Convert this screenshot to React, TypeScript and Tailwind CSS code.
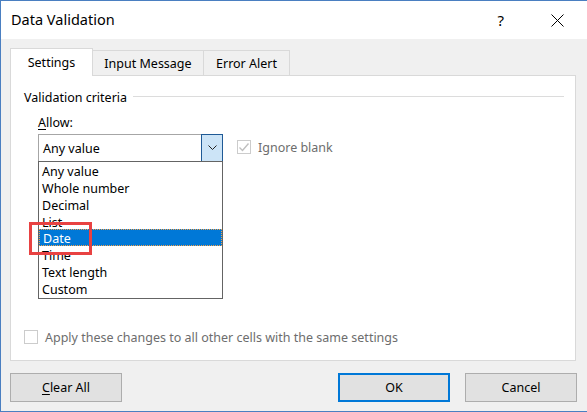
import React from 'react'

const font = { fontFamily: '"Noto Sans", "Open Sans", sans-serif' }

const items = ['Any value', 'Whole number', 'Decimal', 'List', 'Date', 'Time', 'Text length', 'Custom']

function Checkbox({ checked }: { checked?: boolean }) {
  return (
    <span className="w-[14px] h-[14px] border border-[#cccccc] bg-white flex items-center justify-center shrink-0">
      {checked && (
        <svg width="12" height="12" viewBox="0 0 12 12">
          <path d="M1.5 6.5 L4.5 9.5 L10.5 2.5" fill="none" stroke="#bfbfbf" strokeWidth="1.4" />
        </svg>
      )}
    </span>
  )
}

function Button({ children, primary }: { children: React.ReactNode; primary?: boolean }) {
  return (
    <button
      className={`w-[112px] h-[29px] bg-[#e1e1e1] text-[12.5px] text-black flex items-center justify-center pt-[1px] ${
        primary ? 'border-2 border-[#0078d7]' : 'border border-[#adadad]'
      }`}
    >
      {children}
    </button>
  )
}

export default function App() {
  return (
    <div
      className="w-[587px] h-[412px] bg-[#f0f0f0] border-l border-t border-b border-[#4a7fc1] flex flex-col text-black"
      style={font}
    >
      {/* Title bar */}
      <div className="h-[38px] bg-white flex items-center pl-[10px] shrink-0">
        <span className="text-[14.5px] flex-1">Data Validation</span>
        <span className="text-[15px] mr-[47px]">?</span>
        <svg width="13" height="13" viewBox="0 0 13 13" className="mr-[23px]">
          <path d="M0.5 0.5 L12.5 12.5 M12.5 0.5 L0.5 12.5" stroke="#000" strokeWidth="1" />
        </svg>
      </div>

      {/* Tabs */}
      <div className="flex items-end pl-[9px] pt-[9px] shrink-0">
        <div className="relative z-10 -mb-px w-[83px] h-[28px] bg-white border border-b-0 border-[#d9d9d9] flex items-center justify-center text-[12.5px] pt-[2px]">
          Settings
        </div>
        <div className="-ml-px w-[112px] h-[25px] border border-b-0 border-[#d9d9d9] flex items-center justify-center text-[12.5px] pt-[2px]">
          Input Message
        </div>
        <div className="-ml-px w-[87px] h-[25px] border border-b-0 border-[#d9d9d9] flex items-center justify-center text-[12.5px] pt-[2px]">
          Error Alert
        </div>
      </div>

      {/* Panel */}
      <div className="mx-[9px] w-[566px] h-[286px] bg-white border border-[#d9d9d9] flex flex-col shrink-0">
        <div className="flex items-center mt-[14px] ml-[13px] mr-[11px] h-[16px]">
          <span className="text-[12.5px] leading-none">Validation criteria</span>
          <span className="flex-1 h-px bg-[#dcdcdc] ml-[6px] -mt-[4px]" />
        </div>

        <div className="ml-[27px] mt-[9px] text-[12.5px] leading-[16px]">
          <span className="underline underline-offset-2">A</span>llow:
        </div>

        <div className="flex items-start ml-[27px] mt-[3px]">
          <div className="relative w-[185px] h-[28px]">
            <div className="w-full h-full border border-[#a6a6a6] border-b-[#646464] bg-white flex items-center">
              <span className="flex-1 pl-[4px] pt-[2px] text-[12.5px]">Any value</span>
              <div className="w-[22px] h-[28px] -mr-px -mt-px -mb-px bg-[#cce4f7] border border-[#1f5a96] flex items-center justify-center">
                <svg width="9" height="6" viewBox="0 0 9 6">
                  <path d="M0.5 0.5 L4.5 4.5 L8.5 0.5" fill="none" stroke="#222" strokeWidth="1" />
                </svg>
              </div>
            </div>

            {/* Dropdown list */}
            <div className="absolute left-0 top-[27px] w-[185px] h-[138px] bg-white border border-[#646464] z-20">
              {items.map(item => (
                <div
                  key={item}
                  className={`h-[17px] flex items-center pl-[3px] pt-[3px] text-[12.5px] ${
                    item === 'Date'
                      ? 'bg-[#0078d7] text-white border border-dotted border-[#f5a24a] -mt-px'
                      : ''
                  }`}
                >
                  {item}
                </div>
              ))}
            </div>

            {/* Highlight box */}
            <div className="absolute left-[-9px] top-[88px] w-[63px] h-[33px] border-[3px] border-[#e84242] z-30" />
          </div>

          <div className="flex items-center ml-[14px] mt-[3px]">
            <Checkbox checked />
            <span className="ml-[7px] pt-[2px] text-[12.5px] text-[#6d6d6d]">Ignore blank</span>
          </div>
        </div>

        <div className="mt-auto mb-[12px] ml-[13px] flex items-center">
          <Checkbox />
          <span className="ml-[7px] pt-[3px] text-[12.5px] text-[#6d6d6d]">Apply these changes to all other cells with the same settings</span>
        </div>
      </div>

      {/* Buttons */}
      <div className="flex items-center pl-[9px] pr-[10px] mt-[12px]">
        <Button>
          <span className="underline underline-offset-2">C</span>lear All
        </Button>
        <div className="flex-1" />
        <div className="mr-[15px]">
          <Button primary>OK</Button>
        </div>
        <Button>Cancel</Button>
      </div>
    </div>
  )
}
